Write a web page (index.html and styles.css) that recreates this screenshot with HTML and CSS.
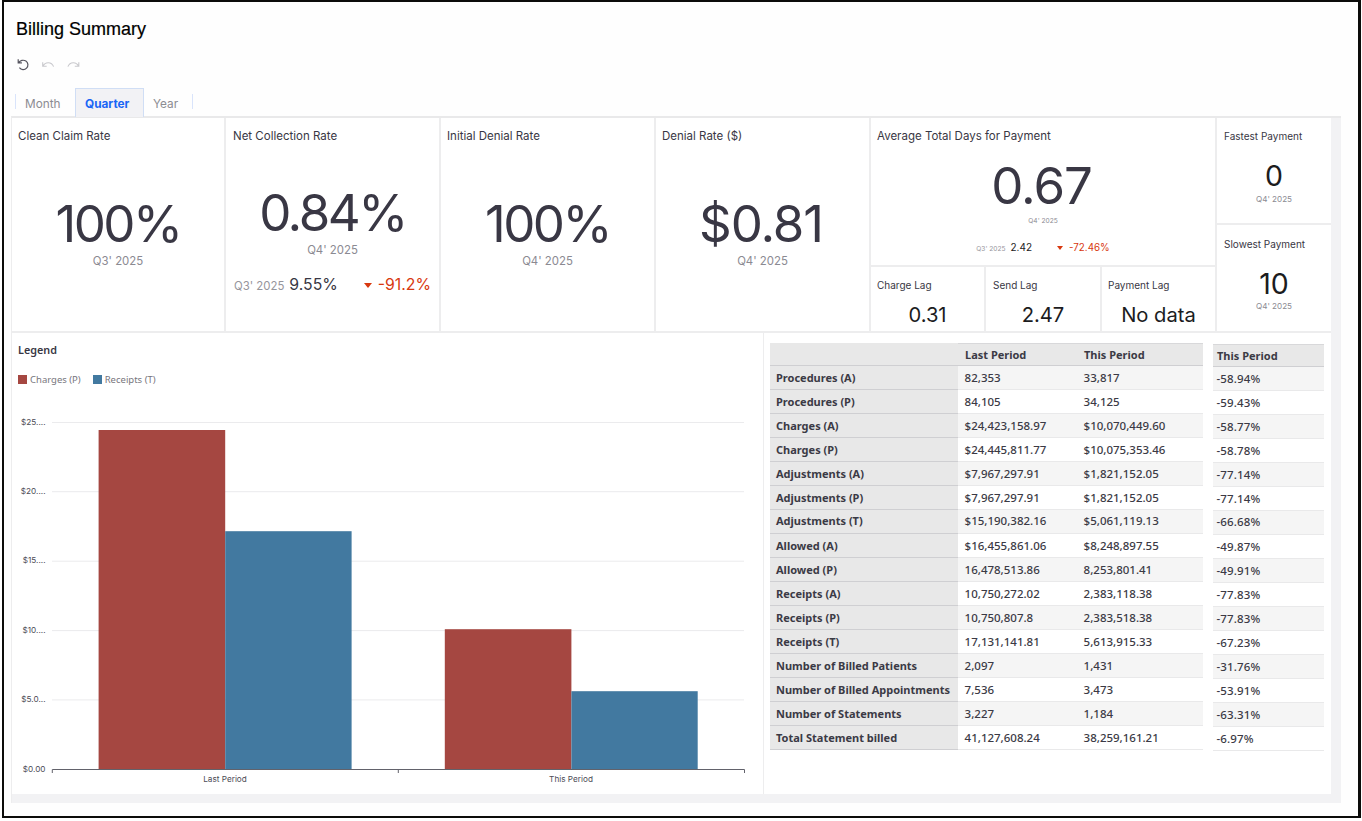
FILE: index.html
```html
<!DOCTYPE html>
<html lang="en">
<head>
<meta charset="utf-8">
<title>Billing Summary</title>
<link rel="stylesheet" href="styles.css">
</head>
<body>
<div class="frame">
  <h1 class="page-title">Billing Summary</h1>
  <div class="toolbar">
    <svg class="tool tool-reset" width="14" height="14" viewBox="0 0 14 14"><path d="M2.2 1.2V4.9H5.9M2.6 4.6C4.2 2.3 7.4 1.5 9.9 3A4.7 4.7 0 1 1 3.4 9.6"/></svg>
    <svg class="tool" width="14" height="14" viewBox="0 0 14 14"><path d="M1.7 4.2V8.3H5.7M2.1 8C4.1 3.6 10.5 3.4 12.6 8.6"/></svg>
    <svg class="tool" width="14" height="14" viewBox="0 0 14 14"><path d="M12.8 4.2V8.3H8.8M12.4 8C10.4 3.6 4 3.4 1.9 8.6"/></svg>
  </div>
  <nav class="tabs">
    <span class="tab tab-month">Month</span>
    <span class="tab tab-active">Quarter</span>
    <span class="tab tab-year">Year</span>
  </nav>
  <main class="sheet">
    <section class="metrics">
      <article class="card kpi"><h2>Clean Claim Rate</h2><div class="value percent">100%</div><div class="period">Q3' 2025</div></article>
      <article class="card kpi kpi-compare"><h2>Net Collection Rate</h2><div class="value percent">0.84%</div><div class="period">Q4' 2025</div>
        <div class="compare"><span class="prev-period">Q3' 2025</span><span class="prev">9.55%</span><i class="down"></i><span class="delta">-91.2%</span></div></article>
      <article class="card kpi"><h2>Initial Denial Rate</h2><div class="value percent">100%</div><div class="period">Q4' 2025</div></article>
      <article class="card kpi"><h2>Denial Rate ($)</h2><div class="value">$0.81</div><div class="period">Q4' 2025</div></article>
      <div class="stack days">
        <article class="card kpi kpi-days"><h2>Average Total Days for Payment</h2><div class="value">0.67</div><div class="period">Q4' 2025</div>
          <div class="compare"><span class="prev-period">Q3' 2025</span><span class="prev">2.42</span><i class="down"></i><span class="delta">-72.46%</span></div></article>
        <div class="lags">
          <article class="card lag"><h3>Charge Lag</h3><div class="value">0.31</div></article>
          <article class="card lag lag-send"><h3>Send Lag</h3><div class="value">2.47</div></article>
          <article class="card lag"><h3>Payment Lag</h3><div class="value">No data</div></article>
        </div>
      </div>
      <div class="stack extremes">
        <article class="card extreme"><h3>Fastest Payment</h3><div class="value">0</div><div class="period">Q4' 2025</div></article>
        <article class="card extreme extreme-slow"><h3>Slowest Payment</h3><div class="value">10</div><div class="period">Q4' 2025</div></article>
      </div>
    </section>
    <section class="details">
      <article class="card chart-card">
        <h4>Legend</h4>
        <div class="legend"><i class="swatch charges"></i><span class="legend-charges">Charges (P)</span><i class="swatch receipts"></i><span>Receipts (T)</span></div>
        <svg class="chart" width="751" height="390" viewBox="12 404 751 390">
          <g class="gridlines"><path d="M52 422.5H744M52 491.7H744M52 561.2H744M52 630.6H744M52 699.9H744"/></g>
          <rect class="charges" x="98.6" y="430" width="126.6" height="339.5"/>
          <rect class="receipts" x="225.2" y="531.2" width="126.4" height="238.3"/>
          <rect class="charges" x="444.8" y="629.2" width="126.6" height="140.3"/>
          <rect class="receipts" x="571.4" y="691.2" width="126.3" height="78.3"/>
          <path class="axis" d="M52.3 773V769.5H744.5V773M398.3 769.5V773"/>
          <g class="ticks">
            <text x="45.5" y="425.3">$25....</text><text x="45.5" y="494.3">$20....</text><text x="45.5" y="563.3">$15....</text>
            <text x="45.5" y="633.3">$10....</text><text x="45.5" y="702.3">$5.0...</text><text x="45.5" y="772.3">$0.00</text>
          </g>
          <g class="categories"><text x="225" y="782.4">Last Period</text><text x="571" y="782.4">This Period</text></g>
        </svg>
      </article>
      <article class="card tables">
        <table class="main-table">
          <thead><tr><th class="corner"></th><th class="c1">Last Period</th><th class="c2">This Period</th></tr></thead>
          <tbody>
            <tr><th>Procedures (A)</th><td>82,353</td><td>33,817</td></tr>
            <tr><th>Procedures (P)</th><td>84,105</td><td>34,125</td></tr>
            <tr><th>Charges (A)</th><td>$24,423,158.97</td><td>$10,070,449.60</td></tr>
            <tr><th>Charges (P)</th><td>$24,445,811.77</td><td>$10,075,353.46</td></tr>
            <tr><th>Adjustments (A)</th><td>$7,967,297.91</td><td>$1,821,152.05</td></tr>
            <tr><th>Adjustments (P)</th><td>$7,967,297.91</td><td>$1,821,152.05</td></tr>
            <tr class="tight"><th>Adjustments (T)</th><td>$15,190,382.16</td><td>$5,061,119.13</td></tr>
            <tr><th>Allowed (A)</th><td>$16,455,861.06</td><td>$8,248,897.55</td></tr>
            <tr><th>Allowed (P)</th><td>16,478,513.86</td><td>8,253,801.41</td></tr>
            <tr><th>Receipts (A)</th><td>10,750,272.02</td><td>2,383,118.38</td></tr>
            <tr><th>Receipts (P)</th><td>10,750,807.8</td><td>2,383,518.38</td></tr>
            <tr><th>Receipts (T)</th><td>17,131,141.81</td><td>5,613,915.33</td></tr>
            <tr><th>Number of Billed Patients</th><td>2,097</td><td>1,431</td></tr>
            <tr><th>Number of Billed Appointments</th><td>7,536</td><td>3,473</td></tr>
            <tr><th>Number of Statements</th><td>3,227</td><td>1,184</td></tr>
            <tr><th>Total Statement billed</th><td>41,127,608.24</td><td>38,259,161.21</td></tr>
          </tbody>
        </table>
        <table class="change-table">
          <thead><tr><th>This Period</th></tr></thead>
          <tbody>
            <tr><td>-58.94%</td></tr><tr><td>-59.43%</td></tr><tr><td>-58.77%</td></tr><tr><td>-58.78%</td></tr>
            <tr><td>-77.14%</td></tr><tr><td>-77.14%</td></tr><tr class="tight"><td>-66.68%</td></tr><tr><td>-49.87%</td></tr>
            <tr><td>-49.91%</td></tr><tr><td>-77.83%</td></tr><tr><td>-77.83%</td></tr><tr><td>-67.23%</td></tr>
            <tr><td>-31.76%</td></tr><tr><td>-53.91%</td></tr><tr><td>-63.31%</td></tr><tr><td>-6.97%</td></tr>
          </tbody>
        </table>
      </article>
    </section>
  </main>
</div>
</body>
</html>
```
FILE: styles.css
```css
* { box-sizing: border-box; }
html { background: #fff; }
body { margin: 0; height: 821px; overflow: hidden; padding: 0 1px 3px 2px; font-family: Inter, sans-serif; color: #393744; }
h1, h2, h3, h4 { margin: 0; font-weight: 400; }

.frame { height: 818px; border: 2px solid #0c0c0a; border-right-width: 3px; background: #fefefe; padding: 16px 0 0 7px; }
.page-title { height: 22px; padding-left: 5px; font: 400 18px/22px "Liberation Sans", sans-serif; color: #000; -webkit-text-stroke: 0.2px #000; }

.toolbar { display: flex; gap: 11px; height: 14px; margin-top: 18px; padding-left: 5px; }
.tool { fill: none; stroke: #c9c9cd; stroke-width: 1.1; }
.tool-reset { stroke: #55545e; stroke-width: 1.2; }

.tabs { display: flex; align-items: flex-end; height: 29px; margin-top: 16px; font-size: 11.8px; line-height: 16px; color: #8c8c92; }
.tab-month { width: 60px; height: 23px; margin-left: 4px; padding-left: 10px; background: linear-gradient(#d9e4fb, #d9e4fb) 0 0 / 1px 15px no-repeat; }
.tab-active { width: 69px; height: 29px; padding: 7px 0 0 9px; border: 1px solid #d0def5; border-bottom: 0; background: #f2f2f5; color: #1a66f5; font-weight: 700; }
.tab-year { width: 49px; height: 23px; padding-left: 9px; background: linear-gradient(#d9e4fb, #d9e4fb) 100% 0 / 1px 15px no-repeat; }
.tab-month, .tab-year { padding-top: 2px; }

.sheet { width: 1330px; height: 687px; border-top: 2px solid #e9e9ea; border-left: 1px solid #ededee; padding: 0 10px 8px 0; margin-top: -1px; background: #f2f2f4; }
.card { background: #fff; }

.metrics { display: grid; grid-template-columns: 212px 213px 213px 213px 344px 114px; gap: 2px; height: 213px; background: #ededee; }
.stack { display: grid; gap: 2px; }
.days { grid-template-rows: 147px 64px; }
.extremes { grid-template-rows: 105px 106px; }
.lags { display: grid; grid-template-columns: 113px 114px 113px; gap: 2px; }

.kpi { padding-top: 10px; text-align: center; }
.kpi h2 { padding-left: 6px; text-align: left; font-size: 11.5px; line-height: 16px; }
.kpi .value { margin-top: 50px; padding-right: 3px; font-size: 51px; line-height: 60px; letter-spacing: -1.1px; }
.kpi .value.percent { padding-right: 0; letter-spacing: -2.5px; }
.period { color: #8b8a92; }
.kpi .period { margin-top: -1px; font-size: 11.4px; line-height: 16px; }
.kpi-compare h2 { padding-left: 7px; }
.kpi-compare .value { margin-top: 39px; }
.compare { display: flex; align-items: baseline; justify-content: center; }
.prev-period { color: #96959c; }
.delta { color: #d8380f; }
.down { width: 0; height: 0; border: solid transparent; border-top-color: #d8380f; border-bottom: 0; align-self: center; }
.kpi-compare .compare { margin-top: 17px; font-size: 15.8px; line-height: 20px; }
.kpi-compare .prev-period { font-size: 11.4px; }
.kpi-compare .prev { margin-left: 5px; }
.kpi-compare .down { margin: 0 6px 0 26px; border-width: 5px 4.5px 0; }
.kpi-days .value { margin-top: 12px; }
.kpi-days .period { margin-top: 0; font-size: 6.6px; line-height: 10px; }
.kpi-days .compare { margin-top: 14px; font-size: 10px; line-height: 14px; }
.kpi-days .prev-period { font-size: 6.6px; }
.kpi-days .prev { margin-left: 5px; color: #222; }
.kpi-days .delta { font-size: 9.8px; }
.kpi-days .down { margin: 0 6px 0 25px; border-width: 4px 3px 0; }

h3 { padding-left: 6px; text-align: left; font-size: 10px; line-height: 14px; }
.lag { padding-top: 11px; text-align: center; }
.lag-send h3, .extreme h3 { padding-left: 7px; }
.lag .value { margin-top: 11px; font-size: 20.2px; line-height: 24px; color: #1c1c1e; }
.extreme { padding-top: 11px; text-align: center; }
.extreme .value { margin-top: 16px; font-size: 28.5px; line-height: 34px; color: #1c1c1e; }
.extreme .period { font-size: 8.1px; line-height: 12px; }
.extreme-slow { padding-top: 12px; }
.extreme-slow .period { margin-top: -1px; }

.details { display: grid; grid-template-columns: 751px 567px; gap: 1px; height: 463px; padding-top: 2px; background: #ededee; }
.chart-card { padding-top: 9px; font-family: "Noto Sans", sans-serif; }
.chart-card h4 { padding-left: 6px; font-size: 10.8px; font-weight: 600; line-height: 15px; }
.legend { display: flex; align-items: center; height: 14px; margin: 15px 0 0 6px; font-size: 9.5px; color: #77767d; }
.swatch { width: 9px; height: 9px; margin-right: 3px; }
.legend-charges { margin-right: 12px; }
.swatch.charges { background: #a54741; }
.swatch.receipts { background: #4279a0; }
rect.charges { fill: #a54741; }
rect.receipts { fill: #4279a0; }
.chart { display: block; margin-top: 18px; font: 8.2px Inter, sans-serif; }
.chart text { fill: #4c4b55; }
.gridlines { fill: none; stroke: #ebebed; stroke-width: 1; }
.axis { fill: none; stroke: #62626b; stroke-width: 1; }
.ticks { text-anchor: end; }
.categories { text-anchor: middle; }

.tables { display: flex; align-items: flex-start; gap: 10px; padding: 10px 0 0 6px; font: 500 11.5px "Noto Sans", sans-serif; color: #3b3a45; }
table { border-collapse: separate; border-spacing: 0; table-layout: fixed; }
th, td { height: 24px; padding: 0; text-align: left; line-height: 16px; border-bottom: 1px solid #e9e9ea; white-space: nowrap; vertical-align: middle; }
th { font-size: 11px; font-weight: 700; background: #e8e8e8; border-bottom-color: #cfcfd2; }
thead th { height: 23px; padding-top: 1px; border-top: 1px solid #d8d8da; }
.main-table { width: 433px; }
.corner { width: 188px; border-top-color: #e8e8e8; }
.c1 { width: 119px; padding-left: 7px; }
.c2 { width: 126px; padding-left: 7px; }
.main-table tbody th { padding-left: 6px; }
.main-table td { padding-left: 6.6px; }
.change-table { width: 111px; margin-top: 1px; }
.change-table th { padding-left: 4px; }
.change-table td { padding-left: 3.5px; letter-spacing: 0.15px; }
tbody tr:nth-child(odd) td { background: #f5f5f5; }
.tight th, .tight td { padding-bottom: 2px; }
```
